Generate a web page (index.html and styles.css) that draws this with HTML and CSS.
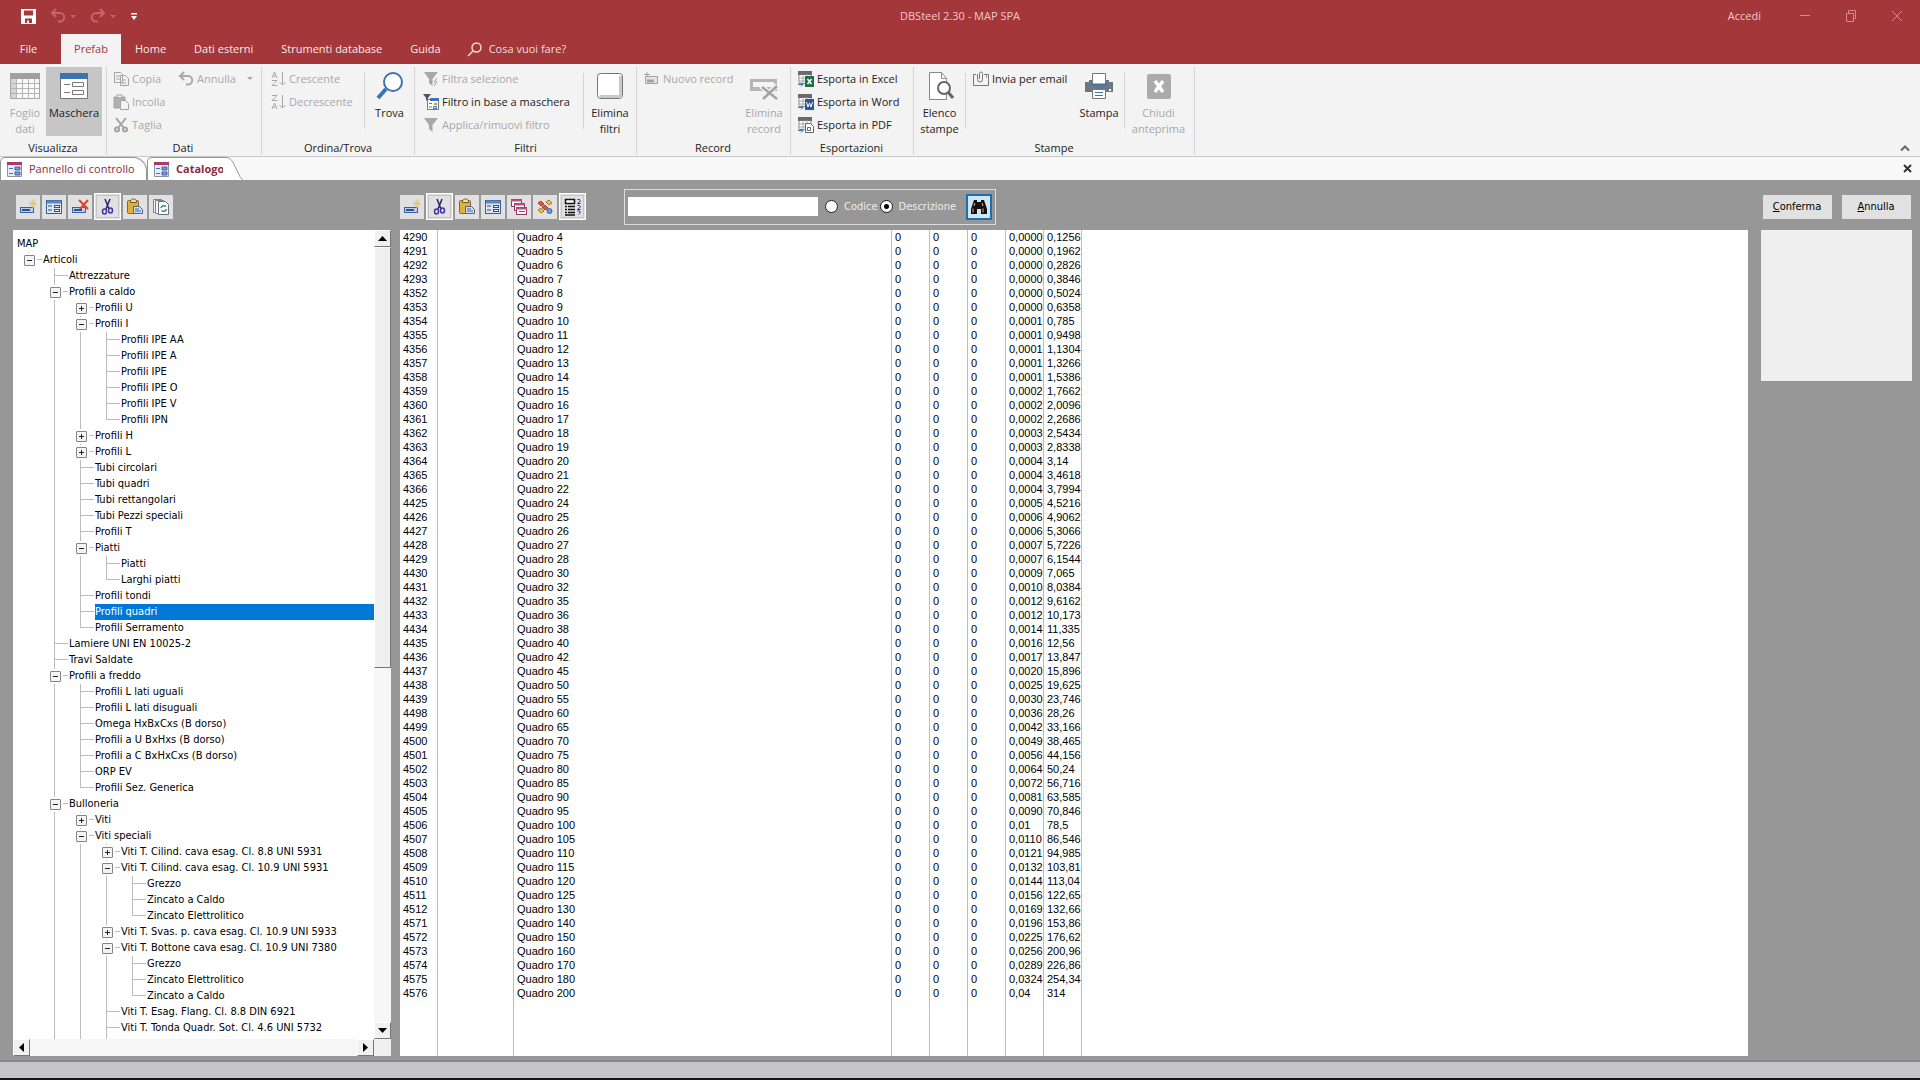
FILE: index.html
```html
<!DOCTYPE html>
<html lang="it">
<head>
<meta charset="utf-8">
<title>DBSteel 2.30 - MAP SPA</title>
<link rel="stylesheet" href="styles.css">
</head>
<body>
<svg class="defs" width="0" height="0" aria-hidden="true">
  <symbol id="i-new" viewBox="0 0 18 18"><rect x="1.500" y="9.500" width="13" height="5" fill="#bcd0ee" stroke="#3f5f9f"/><path d="M3 12h8" stroke="#2b4f9b" stroke-width="2"/><path d="M14 1v9M10 5.500h8M11 2.500l6 6M17 2.500l-6 6" stroke="#e3c443"/></symbol>
  <symbol id="i-form" viewBox="0 0 18 18"><rect x="1.500" y="2.500" width="15" height="13" fill="#dbe6f7" stroke="#3d5f96"/><path d="M2 4h14" stroke="#5d86c6" stroke-width="3"/><path d="M3 8h4M3 12h4" stroke="#2d4b7e"/><rect x="9.500" y="7.500" width="5" height="2" fill="#fff" stroke="#2d4b7e"/><rect x="9.500" y="11.500" width="5" height="2" fill="#fff" stroke="#2d4b7e"/></symbol>
  <symbol id="i-del" viewBox="0 0 18 18"><rect x="1.500" y="9.500" width="13" height="5" fill="#bcd0ee" stroke="#3f5f9f"/><path d="M3 12h8" stroke="#2b4f9b" stroke-width="2"/><path d="M8 2l9 9M17 2l-8 9" stroke="#d5452f" stroke-width="2"/></symbol>
  <symbol id="i-cut" viewBox="0 0 18 18"><path d="M6 1l4 10M11 1L7 11" stroke="#2a2466" stroke-width="1.500" fill="none"/><ellipse cx="5.500" cy="13.500" rx="2" ry="2.500" fill="none" stroke="#4038a0" stroke-width="1.500"/><ellipse cx="11.500" cy="12.500" rx="2" ry="2.500" fill="none" stroke="#4038a0" stroke-width="1.500"/></symbol>
  <symbol id="i-paste" viewBox="0 0 18 18"><rect x="1.500" y="2.500" width="11" height="13" rx="1" fill="#e0b13a" stroke="#8a6a1c"/><path d="M4.500 4.500v-2l2-1.500h2l2 1.500v2z" fill="#f2e3a0" stroke="#6f5a22"/><path d="M7.500 8.500h6l3 3v4h-9z" fill="#cfdcf2" stroke="#47679c"/><path d="M9 11h4M9 13h6" stroke="#47679c"/></symbol>
  <symbol id="i-pages" viewBox="0 0 18 18"><path d="M1.500 1.500h8v13h-8z" fill="#f3f5f7" stroke="#7b8591"/><path d="M3.500 2.500h8v13h-8z" fill="#f3f5f7" stroke="#7b8591"/><path d="M6.500 3.500h7l3 3v10h-10z" fill="#fafcff" stroke="#66717d"/><path d="M9 10a3 3 0 0 1 5-1.500M14.500 11a3 3 0 0 1-5 1.500" stroke="#3d9454" fill="none" stroke-width="1.500"/></symbol>
  <symbol id="i-cascade" viewBox="0 0 18 18"><g fill="#fff" stroke="#8f3a5b"><rect x="1.500" y="1.500" width="10" height="7"/><rect x="4.500" y="5.500" width="10" height="7"/><rect x="6.500" y="9.500" width="10" height="7"/></g><path d="M1 2.500h11M4 6.500h11M6 10.500h11" stroke="#c0507a" stroke-width="2"/><path d="M9 13.500h6" stroke="#476bb0"/></symbol>
  <symbol id="i-blocks" viewBox="0 0 18 18"><path d="M2 5l3-2 3 3-3 2zM6 9l3-2 3 3-3 2z" fill="#d9593b" stroke="#a8402a"/><path d="M10 4l3-2 3 3-3 2z" fill="#e8bd52" stroke="#a87c22"/><path d="M2 12l3-2 3 3-3 2z" fill="#e8bd52" stroke="#a87c22"/><circle cx="13.500" cy="13" r="2.500" fill="#6d9be0" stroke="#3b62a5"/></symbol>
  <symbol id="i-sort" viewBox="0 0 18 18"><rect x="1.500" y="1.500" width="9" height="4" fill="#fff" stroke="#111" stroke-width="1.500"/><path d="M1 8.500h2M4 8.500h7M1 11.500h2M4 11.500h7M1 14.500h2M4 14.500h7M1 17h10" stroke="#111" stroke-width="1.500"/><path d="M13.500 1.500h2q1.500 1 0 2.500l-2 1.500h3M13.500 7.500h2q1.500 1 0 2.500l-2 1.500h3M13.500 13h2q1.500 1 0 2.500l-1 1" stroke="#2a2f8a" fill="none"/></symbol>
  <symbol id="i-tab" viewBox="0 0 15 15"><path d="M.5.500h14v14H.5z" fill="#e6edf8" stroke="#8a93a8"/><path d="M0 1.500h15" stroke="#a83a63" stroke-width="3"/><path d="M2 6.500h4M2 11.500h4" stroke="#4b6fb4"/><path d="M8 5h5v3H8zM8 10h5v3H8z" fill="#7d9bd4" stroke="#4463a5"/></symbol>
  <symbol id="i-grid" viewBox="0 0 16 16"><path d="M1 1.500h12v11H1z" fill="#fff" stroke="#8b8b8b"/><path d="M0 2h14" stroke="#6a6a6a" stroke-width="4"/><path d="M1 7h12M1 10h12M5 3v10M9 3v10" stroke="#a5a5a5"/></symbol>
  <symbol id="i-undo" viewBox="0 0 16 16"><path d="M6 1L2 5l4 4M2.500 5H10a4 4 0 0 1 0 8.500H8" fill="none" stroke="currentColor" stroke-width="2"/></symbol>
  <symbol id="i-funnel" viewBox="0 0 16 16"><path d="M1 1h14L9.500 8v7L6 12V8z" fill="currentColor"/></symbol>
</svg>

<header class="titlebar">
  <div class="title-row">
    <div class="quick">
      <button class="qbtn" aria-label="Salva"><svg width="15" height="15" viewBox="0 0 15 15"><path fill-rule="evenodd" d="M0 0h15v15H0zM3 1.500v5h9v-5zM4 9.500V14h2v-2.500h2V14h3V9.500z" fill="#fff"/></svg></button>
      <button class="qbtn dim" aria-label="Annulla"><svg width="16" height="16"><use href="#i-undo"/></svg><span class="caret"></span></button>
      <button class="qbtn dim" aria-label="Ripeti"><svg width="16" height="16" viewBox="0 0 16 16"><path d="M10 1l4 4-4 4M13.500 5H6a4 4 0 0 0 0 8.500h2" fill="none" stroke="currentColor" stroke-width="2"/></svg><span class="caret"></span></button>
      <button class="qbtn" aria-label="Personalizza"><svg width="8" height="9" viewBox="0 0 8 9"><path d="M1 1h6v1.500H1zM1 4h6L4 8z" fill="#fff"/></svg></button>
    </div>
    <h1 class="app-title">DBSteel 2.30 - MAP SPA</h1>
    <div class="window-tools">
      <a class="login" href="#">Accedi</a>
      <button aria-label="Riduci"><svg width="12" height="12"><path d="M1 5.500h10" stroke="#d6888a"/></svg></button>
      <button aria-label="Ripristina"><svg width="12" height="12" fill="none" stroke="#d6888a"><path d="M1.500 3.500h7v8h-7zM3.500 3V.500h7v8H9"/></svg></button>
      <button aria-label="Chiudi"><svg width="12" height="12"><path d="M1 1l10 10M11 1L1 11" stroke="#d6888a"/></svg></button>
    </div>
  </div>
  <nav class="menu">
    <button class="menu-tab tab-file">File</button>
    <button class="menu-tab active">Prefab</button>
    <button class="menu-tab">Home</button>
    <button class="menu-tab">Dati esterni</button>
    <button class="menu-tab">Strumenti database</button>
    <button class="menu-tab">Guida</button>
    <button class="menu-tab tell"><svg width="15" height="15" viewBox="0 0 15 15" fill="none" stroke="#f3dcdc" stroke-width="1.500"><circle cx="9.500" cy="5.500" r="4.500"/><path d="M6 9l-5 5"/></svg>Cosa vuoi fare?</button>
  </nav>
</header>

<section class="ribbon">
  <div class="group g-view">
    <div class="group-body">
      <button class="big off w-sheet"><svg width="30" height="28" viewBox="0 0 30 28"><path d="M.5 1.500h29v25H.5z" fill="#fafafa" stroke="#a5a5a5"/><path d="M0 4h30" stroke="#a0a0a0" stroke-width="6"/><path d="M1 7h5v19H1z" fill="#d5d5d5"/><path d="M1 11.500h28M1 16.500h28M1 21.500h28M6.500 7v20M12.500 7v20M18.500 7v20M24.500 7v20" stroke="#b5b5b5"/></svg>Foglio<br>dati</button>
      <button class="big pressed w-form"><svg width="28" height="28" viewBox="0 0 28 28"><path d="M.5 1.500h27v25H.5z" fill="#fff" stroke="#777"/><path d="M0 4h28" stroke="#3f73ab" stroke-width="6"/><path d="M4 12.500h6M4 20.500h6" stroke="#777"/><path d="M12.500 10.500h11v4h-11zM12.500 18.500h11v4h-11z" fill="none" stroke="#777"/></svg>Maschera</button>
    </div>
    <div class="group-label">Visualizza</div>
  </div>
  <div class="group g-data">
    <div class="group-body">
      <div class="stack w-clip">
        <button class="small off"><svg width="16" height="16" fill="#f3f3f3" stroke="#a3a3a3"><path d="M1.500 1.500h6l2 2v8h-8zM3 5h4M3 8h4M7.500 4.500h5l3 3v7h-8zM9 9h4M9 12h4"/></svg>Copia</button>
        <button class="small off"><svg width="16" height="16" fill="#f3f3f3" stroke="#a3a3a3"><path d="M1 3h11v11H1z" fill="#b0b0b0"/><path d="M4 3V1h5v2M7.500 6.500h5l3 3v6h-8z"/></svg>Incolla</button>
        <button class="small off"><svg width="16" height="16" fill="none" stroke="#a3a3a3" stroke-width="2"><path d="M3 1l8 10M13 1L5 11"/><circle cx="4" cy="12.500" r="2"/><circle cx="12" cy="12.500" r="2"/></svg>Taglia</button>
      </div>
      <div class="stack">
        <button class="small off"><svg width="16" height="16"><use href="#i-undo"/></svg>Annulla<span class="caret gap"></span></button>
      </div>
    </div>
    <div class="group-label">Dati</div>
  </div>
  <div class="group g-sort">
    <div class="group-body">
      <div class="stack w-sort">
        <button class="small off"><svg width="16" height="16" fill="none" stroke="currentColor"><path d="M2 7l2.500-6L7 7M3 5h3M2 9.500h5l-5 5h5.500M12.500 1v13M9.500 11l3 3 3-3"/></svg>Crescente</button>
        <button class="small off"><svg width="16" height="16" fill="none" stroke="currentColor"><path d="M2 1.500h5l-5 5h5.500M2 15l2.500-6L7 15M3 13h3M12.500 1v13M9.500 11l3 3 3-3"/></svg>Decrescente</button>
      </div>
      <div class="sep"></div>
      <button class="big w-find"><svg width="28" height="28" viewBox="0 0 28 28" fill="none" stroke="#3f73ab"><circle cx="17" cy="10" r="9" stroke-width="2" fill="#fff"/><path d="M10 17L2 26" stroke-width="4"/></svg>Trova</button>
    </div>
    <div class="group-label">Ordina/Trova</div>
  </div>
  <div class="group g-filter">
    <div class="group-body">
      <div class="stack w-filter">
        <button class="small off"><svg width="16" height="16"><use href="#i-funnel"/><path d="M14 7l-3 4h3l-3 4" stroke="#a3a3a3" fill="none"/></svg>Filtra selezione</button>
        <button class="small"><svg width="16" height="16"><path d="M0 0h8L5 4v4L3 6V4z" fill="#555"/><path d="M4.500 5.500h11v10h-11z" fill="#fff" stroke="#777"/><path d="M7 5.500h9" stroke="#3f73ab" stroke-width="3"/><path d="M6 9.500h3M6 13h3" stroke="#777"/><path d="M11 9h3v2h-3z" fill="#d98a3d"/><path d="M10.500 12.500h3v2h-3z" fill="#fff" stroke="#3f73ab"/></svg>Filtro in base a maschera</button>
        <button class="small off"><svg width="16" height="16"><use href="#i-funnel"/></svg>Applica/rimuovi filtro</button>
      </div>
      <div class="sep"></div>
      <button class="big w-clear"><svg width="26" height="28" viewBox="0 0 26 28"><rect x=".5" y="1.500" width="25" height="25" rx="3" fill="#fff" stroke="#777"/><path d="M2.500 24.500h21V4" fill="none" stroke="#c9c9c9" stroke-width="3"/></svg>Elimina<br>filtri</button>
    </div>
    <div class="group-label">Filtri</div>
  </div>
  <div class="group g-record">
    <div class="group-body">
      <div class="stack w-record">
        <button class="small off"><svg width="16" height="16" fill="none" stroke="#a3a3a3"><path d="M1.500 5.500h12v7h-12z" fill="#e4e4e4"/><path d="M3 10h7" stroke-width="3"/><path d="M3 1v5M0 3.500h6"/></svg>Nuovo record</button>
      </div>
      <button class="big off w-del"><svg width="30" height="28" viewBox="0 0 30 28"><path d="M1 7h27v12H1z" fill="#b5b5b5"/><path d="M4 10h21v5H4z" fill="#f5f5f5"/><path d="M12 14l15 13M28 13L14 27" stroke="#f3f3f3" stroke-width="5"/><path d="M13 15l15 12M28 14L14 27" stroke="#a3a3a3" stroke-width="2.500"/></svg>Elimina<br>record</button>
    </div>
    <div class="group-label">Record</div>
  </div>
  <div class="group g-export">
    <div class="group-body">
      <div class="stack">
        <button class="small"><svg width="16" height="16"><use href="#i-grid"/><path d="M7 5h9v11H7z" fill="#1e7145"/><path d="M9.500 8l4 5M13.500 8l-4 5" stroke="#fff" stroke-width="1.500"/><path d="M0 13.500h5M3 11.500l2 2-2 2" stroke="#3f73ab" fill="none"/></svg>Esporta in Excel</button>
        <button class="small"><svg width="16" height="16"><use href="#i-grid"/><path d="M7 5h9v11H7z" fill="#2b579a"/><path d="M8.500 8l1.500 5 1.500-4 1.500 4 1.500-5" stroke="#fff" fill="none"/><path d="M0 13.500h5M3 11.500l2 2-2 2" stroke="#3f73ab" fill="none"/></svg>Esporta in Word</button>
        <button class="small"><svg width="16" height="16"><use href="#i-grid"/><path d="M7.500 6.500h5l3 3v6h-8z" fill="#fff" stroke="#666"/><path d="M9.500 13.500v-3h3v3z" fill="none" stroke="#666"/><path d="M0 13.500h5M3 11.500l2 2-2 2" stroke="#3f73ab" fill="none"/></svg>Esporta in PDF</button>
      </div>
    </div>
    <div class="group-label">Esportazioni</div>
  </div>
  <div class="group g-print">
    <div class="group-body">
      <button class="big w-list"><svg width="28" height="28" viewBox="0 0 28 28"><path d="M3.500.500h12l5 6v21h-17z" fill="#fff" stroke="#888"/><path d="M15.500.500v6h5" fill="none" stroke="#888"/><circle cx="18" cy="16" r="6" fill="#fff" stroke="#666" stroke-width="2"/><path d="M22 20l5 6" stroke="#666" stroke-width="3"/></svg>Elenco<br>stampe</button>
      <div class="sep"></div>
      <div class="stack w-mail">
        <button class="small"><svg width="16" height="16" fill="none" stroke="#777"><path d="M3 3.500H.500v11h15v-11H11"/><path d="M13 5.500h1" stroke-width="2"/><path d="M4.500 3v5.500a2.500 2.500 0 0 0 5 0V2.500a1.500 1.500 0 0 0-3 0V8" fill="#f3f3f3"/></svg>Invia per email</button>
      </div>
      <button class="big w-print"><svg width="28" height="28" viewBox="0 0 28 28"><path d="M0 10h28v10H0z" fill="#6d7681"/><path d="M4 8h3v5H4zM21 8h3v5h-3z" fill="#6d7681"/><path d="M7.500 1.500h13v11h-13z" fill="#fff" stroke="#777"/><path d="M6 12.500h16" stroke="#3f73ab" stroke-width="2"/><path d="M7.500 17.500h13v9h-13z" fill="#fff" stroke="#777"/><path d="M10 20.500h8M10 23.500h8" stroke="#3f73ab"/><path d="M24 17h2v2h-2z" fill="#fff"/></svg>Stampa</button>
      <div class="sep"></div>
      <button class="big off w-close"><svg width="24" height="28" viewBox="0 0 24 28"><rect y="2" width="24" height="25" rx="2" fill="#ababab"/><path d="M8 9l8 11M16 9L8 20" stroke="#fff" stroke-width="3.500"/></svg>Chiudi<br>anteprima</button>
    </div>
    <div class="group-label">Stampe</div>
  </div>
  <button class="collapse" aria-label="Comprimi barra multifunzione"><svg width="10" height="7"><path d="M1 5.500l4-4 4 4" fill="none" stroke="#666" stroke-width="2"/></svg></button>
</section>

<nav class="doc-tabs">
  <button class="doc-tab first"><svg width="15" height="15"><use href="#i-tab"/></svg>Pannello di controllo</button>
  <button class="doc-tab current"><svg width="15" height="15"><use href="#i-tab"/></svg>Catalogo</button>
  <svg class="tab-edge" width="22" height="23" viewBox="0 0 22 23"><path d="M0 .5h3c4 0 6 3 8 7l5 10c1 3 2 4 4 5.500H0z" fill="#fff"/><path d="M0 .5h3c4 0 6 3 8 7l5 10c1 3 2 4 4 5.500" fill="none" stroke="#8f9996"/></svg>
  <button class="doc-close" aria-label="Chiudi scheda"><svg width="9" height="9"><path d="M1 1l7 7M8 1L1 8" stroke="#333" stroke-width="2"/></svg></button>
</nav>

<main class="workspace">
  <section class="col">
    <div class="tools tools-left">
      <button class="tool" aria-label="Nuovo"><svg width="18" height="18"><use href="#i-new"/></svg></button>
      <button class="tool" aria-label="Scheda"><svg width="18" height="18"><use href="#i-form"/></svg></button>
      <button class="tool" aria-label="Elimina"><svg width="18" height="18"><use href="#i-del"/></svg></button>
      <button class="tool framed" aria-label="Taglia"><svg width="18" height="18"><use href="#i-cut"/></svg></button>
      <button class="tool" aria-label="Incolla"><svg width="18" height="18"><use href="#i-paste"/></svg></button>
      <button class="tool" aria-label="Aggiorna"><svg width="18" height="18"><use href="#i-pages"/></svg></button>
    </div>
    <div class="tree-box">
      <div class="tree-view">
        <div class="root">MAP</div>
        <ul class="tree">
          <li class="open"><span>Articoli</span><ul>
            <li><span>Attrezzature</span></li>
            <li class="open"><span>Profili a caldo</span><ul>
              <li class="shut"><span>Profili U</span></li>
              <li class="open"><span>Profili I</span><ul>
                <li><span>Profili IPE AA</span></li>
                <li><span>Profili IPE A</span></li>
                <li><span>Profili IPE</span></li>
                <li><span>Profili IPE O</span></li>
                <li><span>Profili IPE V</span></li>
                <li><span>Profili IPN</span></li>
              </ul></li>
              <li class="shut"><span>Profili H</span></li>
              <li class="shut"><span>Profili L</span></li>
              <li><span>Tubi circolari</span></li>
              <li><span>Tubi quadri</span></li>
              <li><span>Tubi rettangolari</span></li>
              <li><span>Tubi Pezzi speciali</span></li>
              <li><span>Profili T</span></li>
              <li class="open"><span>Piatti</span><ul>
                <li><span>Piatti</span></li>
                <li><span>Larghi piatti</span></li>
              </ul></li>
              <li><span>Profili tondi</span></li>
              <li><span class="selected">Profili quadri</span></li>
              <li><span>Profili Serramento</span></li>
            </ul></li>
            <li><span>Lamiere UNI EN 10025-2</span></li>
            <li><span>Travi Saldate</span></li>
            <li class="open"><span>Profili a freddo</span><ul>
              <li><span>Profili L lati uguali</span></li>
              <li><span>Profili L lati disuguali</span></li>
              <li><span>Omega HxBxCxs (B dorso)</span></li>
              <li><span>Profili a U BxHxs (B dorso)</span></li>
              <li><span>Profili a C BxHxCxs (B dorso)</span></li>
              <li><span>ORP EV</span></li>
              <li><span>Profili Sez. Generica</span></li>
            </ul></li>
            <li class="open"><span>Bulloneria</span><ul>
              <li class="shut"><span>Viti</span></li>
              <li class="open"><span>Viti speciali</span><ul>
                <li class="shut"><span>Viti T. Cilind. cava esag. Cl. 8.8 UNI 5931</span></li>
                <li class="open"><span>Viti T. Cilind. cava esag. Cl. 10.9 UNI 5931</span><ul>
                  <li><span>Grezzo</span></li>
                  <li><span>Zincato a Caldo</span></li>
                  <li><span>Zincato Elettrolitico</span></li>
                </ul></li>
                <li class="shut"><span>Viti T. Svas. p. cava esag. Cl. 10.9 UNI 5933</span></li>
                <li class="open"><span>Viti T. Bottone cava esag. Cl. 10.9 UNI 7380</span><ul>
                  <li><span>Grezzo</span></li>
                  <li><span>Zincato Elettrolitico</span></li>
                  <li><span>Zincato a Caldo</span></li>
                </ul></li>
                <li><span>Viti T. Esag. Flang. Cl. 8.8 DIN 6921</span></li>
                <li><span>Viti T. Tonda Quadr. Sot. Cl. 4.6 UNI 5732</span></li>
                <li><span>Viti T. Cilind. cava esag. Cl.</span></li>
                <li></li>
              </ul></li>
              <li></li>
            </ul></li>
            <li></li>
          </ul></li>
        </ul>
      </div>
      <div class="vbar">
        <button class="arrow" aria-label="Su"><svg width="9" height="5"><path d="M0 5h9L4.500 0z"/></svg></button>
        <div class="thumb"></div>
        <button class="arrow end" aria-label="Giù"><svg width="9" height="5"><path d="M0 0h9L4.500 5z"/></svg></button>
      </div>
      <div class="hbar">
        <button class="arrow" aria-label="Sinistra"><svg width="5" height="9"><path d="M5 0v9L0 4.500z"/></svg></button>
        <button class="arrow end" aria-label="Destra"><svg width="5" height="9"><path d="M0 0v9l5-4.500z"/></svg></button>
      </div>
      <div class="corner"></div>
    </div>
  </section>

  <section class="col">
    <div class="tools">
      <button class="tool" aria-label="Nuovo"><svg width="18" height="18"><use href="#i-new"/></svg></button>
      <button class="tool framed" aria-label="Taglia"><svg width="18" height="18"><use href="#i-cut"/></svg></button>
      <button class="tool" aria-label="Incolla"><svg width="18" height="18"><use href="#i-paste"/></svg></button>
      <button class="tool" aria-label="Scheda"><svg width="18" height="18"><use href="#i-form"/></svg></button>
      <button class="tool" aria-label="Sovrapponi"><svg width="18" height="18"><use href="#i-cascade"/></svg></button>
      <button class="tool" aria-label="Componenti"><svg width="18" height="18"><use href="#i-blocks"/></svg></button>
      <button class="tool framed" aria-label="Ordina"><svg width="18" height="18"><use href="#i-sort"/></svg></button>
      <form class="search">
        <input class="query" type="text" aria-label="Testo da cercare">
        <input type="radio" name="field" id="by-code"><label for="by-code">Codice</label>
        <input type="radio" name="field" id="by-desc" checked><label for="by-desc">Descrizione</label>
        <button class="find" type="button" aria-label="Cerca"><svg width="16" height="16" viewBox="0 0 16 16"><path d="M3 1h3v2h4V1h3l3 9v5h-6v-5H6v5H0v-5z" fill="#15100d"/><path d="M2 9.500v4M12 9.500v4M4 4l-1 3M11 4l1 3" stroke="#d9b58d"/></svg></button>
      </form>
    </div>
    <div class="sheet">
      <table class="articles">
        <colgroup><col class="c-id"><col class="c-code"><col class="c-desc"><col class="c-num" span="5"></colgroup>
        <tbody id="rows"></tbody>
      </table>
    </div>
  </section>

  <aside class="col side">
    <div class="tools actions">
      <button class="action"><u>C</u>onferma</button>
      <button class="action"><u>A</u>nnulla</button>
    </div>
    <div class="preview"></div>
  </aside>
</main>

<footer class="status"></footer>
<script src="rows.js"></script>
</body>
</html>
```
FILE: rows.js
```js
// Square bars: first id of each block, then "size mq kg" for every article in it.
const blocks = [
  [4290, '4 0,0000 0,1256|5 0,0000 0,1962|6 0,0000 0,2826|7 0,0000 0,3846'],
  [4352, '8 0,0000 0,5024|9 0,0000 0,6358|10 0,0001 0,785|11 0,0001 0,9498|12 0,0001 1,1304|13 0,0001 1,3266|14 0,0001 1,5386|15 0,0002 1,7662|16 0,0002 2,0096|17 0,0002 2,2686|18 0,0003 2,5434|19 0,0003 2,8338|20 0,0004 3,14|21 0,0004 3,4618|22 0,0004 3,7994'],
  [4425, '24 0,0005 4,5216|25 0,0006 4,9062|26 0,0006 5,3066|27 0,0007 5,7226|28 0,0007 6,1544|30 0,0009 7,065|32 0,0010 8,0384|35 0,0012 9,6162|36 0,0012 10,173|38 0,0014 11,335|40 0,0016 12,56|42 0,0017 13,847|45 0,0020 15,896|50 0,0025 19,625|55 0,0030 23,746'],
  [4498, '60 0,0036 28,26|65 0,0042 33,166|70 0,0049 38,465|75 0,0056 44,156|80 0,0064 50,24|85 0,0072 56,716|90 0,0081 63,585|95 0,0090 70,846|100 0,01 78,5|105 0,0110 86,546|110 0,0121 94,985|115 0,0132 103,81|120 0,0144 113,04|125 0,0156 122,65|130 0,0169 132,66'],
  [4571, '140 0,0196 153,86|150 0,0225 176,62|160 0,0256 200,96|170 0,0289 226,86|180 0,0324 254,34|200 0,04 314'],
];

const body = document.getElementById('rows');
const addRow = (cells, className) => {
  const row = body.insertRow();
  if (className) row.className = className;
  cells.forEach((text) => { row.insertCell().textContent = text; });
};

blocks.forEach(([firstId, list]) => {
  list.split('|').forEach((entry, i) => {
    const [size, area, weight] = entry.split(' ');
    addRow([firstId + i, '', 'Quadro ' + size, '0', '0', '0', area, weight]);
  });
});
addRow(['', '', '', '', '', '', '', ''], 'filler');
```
FILE: styles.css
```css
* { box-sizing: border-box; }

body {
  margin: 0;
  height: 100vh;
  display: flex;
  flex-direction: column;
  overflow: hidden;
  background: #979797;
  font: 11px/16px "Open Sans", "Noto Sans", sans-serif;
  color: #222;
}

button {
  margin: 0;
  padding: 0;
  border: 0;
  background: none;
  font: inherit;
  color: inherit;
}

svg { display: block; flex: none; }
.defs { position: absolute; }

.caret {
  border: 3px solid transparent;
  border-top-color: currentColor;
  border-bottom: 0;
}
.caret.gap { margin-left: 8px; }

/* Title bar and menu */
.titlebar { background: #a4373a; color: #fbeaea; }
.title-row {
  display: grid;
  grid-template-columns: 1fr auto 1fr;
  height: 34px;
  padding-bottom: 2px;
  align-items: center;
}
.quick { display: flex; align-items: center; gap: 14px; padding-left: 21px; }
.qbtn { display: flex; align-items: center; gap: 4px; color: #fff; }
.qbtn.dim { color: #c46669; }
.app-title { margin: 0; font-size: 11px; font-weight: 400; color: #f3c9ca; }
.window-tools { display: flex; justify-content: flex-end; align-items: center; gap: 34px; padding-right: 17px; }
.login { color: #f3c9ca; text-decoration: none; margin-right: 4px; }
.menu { display: flex; height: 30px; }
.menu-tab { padding: 0 14px; }
.tab-file { width: 61px; padding: 0 4px 0 0; }
.menu-tab.active { width: 60px; padding: 0; background: #f3f3f3; color: #a4373a; }
.tell { display: flex; align-items: center; gap: 7px; padding-left: 12px; color: #f3dcdc; }

/* Ribbon */
.ribbon {
  display: flex;
  padding-top: 3px;
  height: 93px;
  flex: none;
  background: #f3f3f3;
  border-bottom: 1px solid #c8c8c8;
}
.group {
  display: flex;
  flex-direction: column;
  margin-bottom: 1px;
  border-right: 1px solid #d4d4d4;
}
.group-body { display: flex; flex: 1; }
.group-label { text-align: center; line-height: 14px; }
.g-view { width: 107px; padding-left: 4px; }
.g-data { width: 155px; padding-left: 6px; }
.g-sort { width: 153px; padding-left: 8px; }
.g-filter { width: 222px; padding-left: 8px; }
.g-record { width: 154px; padding-left: 7px; }
.g-export { width: 123px; padding-left: 7px; }
.g-print { width: 281px; }
.g-view .group-label { padding-right: 4px; }
.g-data .group-label, .g-sort .group-label, .g-filter .group-label, .g-record .group-label, .g-export .group-label { padding-right: 8px; }
.big {
  display: flex;
  flex-direction: column;
  align-items: center;
  height: 69px;
  padding-top: 5px;
  white-space: nowrap;
}
.big { display: block; text-align: center; align-self: flex-start; }
.big svg { margin: 0 auto 5px; }
.big:not(:has(br)) { padding-bottom: 15px; }
.pressed { background: #c6c6c6; }
.off { color: #a8a8a8; }
.w-sheet { width: 42px; }
.w-form { width: 56px; }
.w-find { width: 49px; }
.w-clear { width: 52px; }
.w-del { width: 46px; }
.w-list { width: 51px; }
.w-print { width: 50px; }
.w-close { width: 67px; }
.stack { display: flex; flex-direction: column; align-items: flex-start; }
.small { display: flex; align-items: center; gap: 3px; height: 23px; white-space: nowrap; }
.w-clip { width: 65px; }
.w-sort { width: 94px; }
.w-filter { width: 160px; }
.w-record { width: 97px; }
.w-mail { width: 108px; padding-left: 7px; }
.sep { width: 1px; height: 56px; margin-top: 6px; background: #d4d4d4; }
.collapse { margin: auto 10px 4px auto; }

/* Document tabs */
.doc-tabs { display: flex; height: 23px; flex: none; background: #f8f8f8; }
.doc-tab {
  display: flex;
  align-items: center;
  gap: 7px;
  padding-left: 6px;
  background: #fff;
  border: 1px solid #8f9996;
  border-bottom: 0;
  border-radius: 5px 14px 0 0;
  color: #8e2c3c;
  white-space: nowrap;
}
.doc-tab.first { width: 147px; }
.doc-tab.current { width: 76px; border-right: 0; border-radius: 5px 0 0 0; font-weight: 700; }
.doc-close { margin: auto 8px auto auto; }

/* Workspace */
.workspace {
  flex: 1;
  min-height: 0;
  display: grid;
  grid-template-columns: 378px minmax(0, 1fr) 155px;
  gap: 9px;
  padding: 0 8px 4px 13px;
  border-bottom: 2px solid #87878a;
  font: 11px/16px "DejaVu Sans Condensed", "Noto Sans", sans-serif;
  color: #000;
}
.col { display: flex; flex-direction: column; min-height: 0; }
.tools { display: flex; align-items: center; height: 50px; flex: none; gap: 2px; padding-top: 3px; }
.tools-left { padding-left: 3px; }
.tool {
  display: grid;
  place-items: center;
  width: 24px;
  height: 24px;
  background: #e1e1e1;
}
.tool.framed { width: 27px; height: 27px; border: 1px solid #fff; outline: 1px solid #c4c4c4; outline-offset: -3px; }

.search {
  display: flex;
  align-items: center;
  width: 372px;
  height: 36px;
  margin-left: 36px;
  padding-left: 3px;
  border: 1px solid #dcdcdc;
  color: #eee;
}
.query { width: 190px; height: 19px; margin: 0 7px 0 0; padding: 0 4px; border: 0; background: #fff; font: inherit; }
.search input[type="radio"] {
  appearance: none;
  width: 13px;
  height: 13px;
  margin: 0 6px 0 0;
  border: 1px solid #222;
  border-radius: 50%;
  background: #fff;
}
.search input[type="radio"]:checked { background: radial-gradient(circle, #000 0 2px, #fff 3px); }
.search label { margin-right: 2px; }
.find {
  display: grid;
  place-items: center;
  width: 26px;
  height: 26px;
  margin: 0 3px 0 auto;
  background: #cfe6f8;
  border: 2px solid #1c6fb0;
}

/* Tree */
.tree-box {
  flex: 1;
  min-height: 0;
  display: grid;
  grid-template: minmax(0, 1fr) 17px / minmax(0, 1fr) 17px;
  background: #fff;
}
.tree-view { padding: 6px 0 0 4px; overflow: hidden; white-space: nowrap; }
.tree, .tree ul { margin: 0; padding: 0 0 0 10px; list-style: none; }
.tree li {
  display: grid;
  grid-template-columns: 16px minmax(0, 1fr);
  background:
    linear-gradient(#bcbcbc, #bcbcbc) 1px 0 / 1px 100% no-repeat,
    linear-gradient(#bcbcbc, #bcbcbc) 1px 7px / 14px 1px no-repeat;
}
.tree li:last-child { background-size: 1px 7px, 14px 1px; }
.tree li::before { content: ""; width: 9px; height: 9px; margin: 3px 0 0 -3px; }
.tree li > span { grid-column: 2; height: 16px; }
.tree li > ul { grid-column: 2; }
.tree li:empty { height: 16px; }
.tree .open::before, .tree .shut::before {
  border: 1px solid #848484;
  border-radius: 1px;
  box-shadow: 0 0 0 2px #fff;
  background:
    linear-gradient(#222, #222) center / 5px 1px no-repeat,
    #f4f4f4;
}
.tree .shut::before {
  background:
    linear-gradient(#222, #222) center / 5px 1px no-repeat,
    linear-gradient(#222, #222) center / 1px 5px no-repeat,
    #f4f4f4;
}
.selected { background: #0078d7; color: #fff; }

.arrow {
  display: grid;
  place-items: center;
  width: 17px;
  height: 17px;
  background: #f0f0f0;
  border: 1px solid #fff;
  border-color: #fff #777 #777 #fff;
}
.vbar { display: flex; flex-direction: column; background: #f6f6f6; }
.thumb { height: 52%; background: #f0f0f0; border: 1px solid #fff; border-color: #fff #777 #777 #fff; }
.vbar .end { margin-top: auto; }
.hbar { display: flex; background: #f6f6f6; }
.hbar .end { margin-left: auto; }
.corner { background: #f0f0f0; }

/* Article table */
.sheet { flex: 1; min-height: 0; background: #fff; }
.articles {
  height: 100%;
  border-collapse: separate;
  border-spacing: 0;
  table-layout: fixed;
  width: 682px;
  font: 11px/14px "Liberation Sans", sans-serif;
}
.articles td { height: 14px; padding: 0 0 0 3px; border-right: 1px solid #bdbdbd; white-space: nowrap; }
.articles .filler td { height: auto; }
.c-id, .c-num { width: 38px; }
.c-code { width: 76px; }
.c-desc { width: 378px; }

/* Right side */
.side { padding-left: 4px; }
.actions { gap: 10px; justify-content: center; }
.action { width: 69px; height: 24px; background: #e1e1e1; }
.preview { height: 151px; background: #efefef; }

.status { height: 18px; flex: none; background: #c5c5ca; border-bottom: 2px solid #151515; }
```
